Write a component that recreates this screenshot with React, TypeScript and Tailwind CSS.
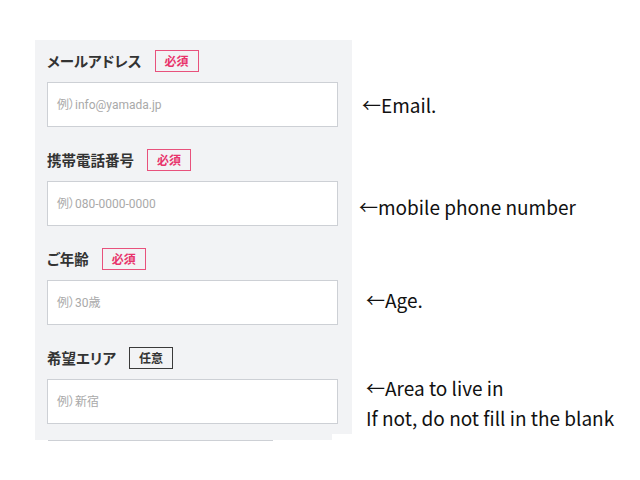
const fields = [
  { label: "メールアドレス", required: true, placeholder: "例）info@yamada.jp", note: ["←Email."], noteClass: "ml-[10px]" },
  { label: "携帯電話番号", required: true, placeholder: "例）080-0000-0000", note: ["←mobile phone number"], noteClass: "ml-[7px] pt-[7px]" },
  { label: "ご年齢", required: true, placeholder: "例）30歳", note: ["←Age."], noteClass: "ml-[14px] pb-[5px]" },
  { label: "希望エリア", required: false, placeholder: "例）新宿", note: ["←Area to live in", "If not, do not fill in the blank"], noteClass: "ml-[14px] pt-[2px]" },
];

function Badge({ required }: { required: boolean }) {
  return required ? (
    <span className="flex h-[22px] w-[44px] items-center justify-center border border-[#e8517c] text-[12px] font-bold text-[#e8336b]">
      必須
    </span>
  ) : (
    <span className="flex h-[22px] w-[44px] items-center justify-center border border-[#3a3a3a] text-[12px] font-bold text-[#333]">
      任意
    </span>
  );
}

export default function App() {
  return (
    <div className="min-h-[480px] w-[640px] bg-white pl-[35px] pt-[40px] font-['Noto_Sans_CJK_JP',sans-serif]">
      {fields.map((f, i) => (
        <div key={f.label}>
          {/* label row */}
          <div className="flex">
            <div className={`flex w-[317px] items-center gap-[13px] bg-[#f2f3f5] pl-[12px] ${i === 0 ? "pt-[10px]" : ""}`}>
              <span className="text-[14.5px] font-bold leading-[22px] text-[#333] [font-feature-settings:'palt']">{f.label}</span>
              <Badge required={f.required} />
            </div>
          </div>
          {/* input row */}
          <div className="flex items-start">
            <div className={`w-[317px] bg-[#f2f3f5] pl-[12px] pr-[14px] pt-[10px] ${i === fields.length - 1 ? "pb-[10px]" : "pb-[22px]"}`}>
              <div className="flex h-[45px] items-center border border-[#cdd0d5] bg-white pl-[9px] font-['Roboto','Noto_Sans_CJK_JP',sans-serif] text-[12px] text-[#a9a9a9] [font-feature-settings:'palt']">
                {f.placeholder}
              </div>
            </div>
            <div className={`mt-[10px] flex h-[45px] flex-col justify-center text-[19px] leading-[30px] whitespace-nowrap text-[#111] ${f.noteClass}`}>
              {f.note.map((n) => (
                <span key={n}>{n}</span>
              ))}
            </div>
          </div>
        </div>
      ))}
      <div className="h-[6px] w-[297px] bg-[#f2f3f5]" />
      <div className="ml-[13px] h-[1px] w-[225px] bg-[#cdd0d5]" />
    </div>
  );
}
